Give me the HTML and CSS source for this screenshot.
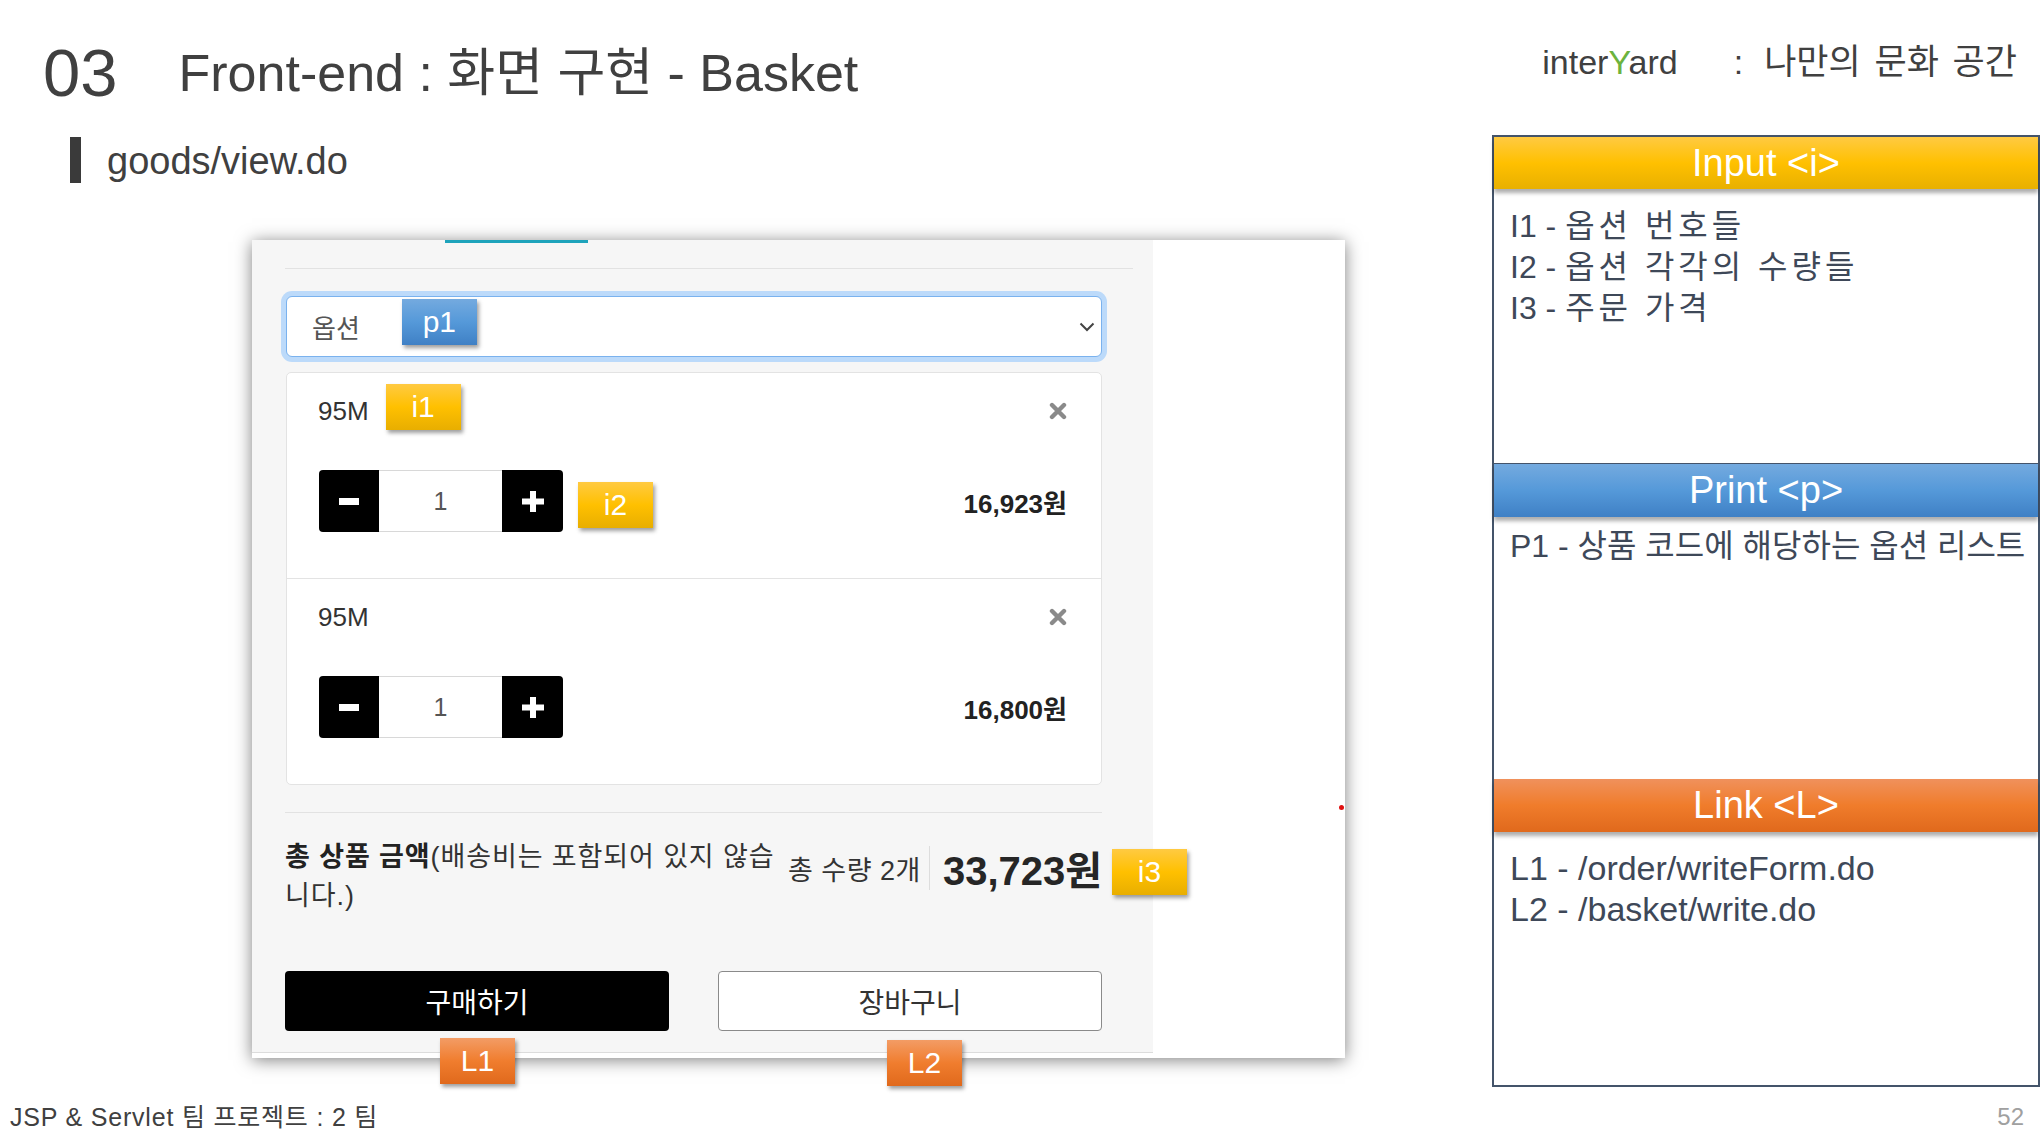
FILE: index.html
```html
<!DOCTYPE html>
<html lang="ko">
<head>
<meta charset="utf-8">
<title>Front-end : 화면 구현 - Basket</title>
<link rel="stylesheet" href="styles.css">
</head>
<body>
<div class="slide">
  <header class="top">
    <div class="title-group">
      <span class="num">03</span>
      <h1 class="title">Front-end : 화면 구현 - Basket</h1>
    </div>
    <div class="brand">
      <span class="brand-name">inter<span class="brand-y">Y</span>ard</span>
      <span class="brand-colon">:</span>
      <span class="brand-motto">나만의 문화 공간</span>
    </div>
  </header>

  <div class="main">
    <section class="left">
      <div class="sub"><span class="sub-bar"></span><span class="sub-text">goods/view.do</span></div>

      <div class="shot">
        <div class="shot-body">
          <div class="tab-line"></div>
          <div class="rule rule-wide"></div>

          <div class="select">
            <span class="select-label">옵션</span>
            <span class="badge badge-b badge-p1">p1</span>
            <svg class="chevron" width="16" height="10" viewBox="0 0 16 10"><path d="M1.5 1.5 L8 8 L14.5 1.5" fill="none" stroke="#444" stroke-width="2"/></svg>
          </div>

          <div class="items">
            <div class="item">
              <div class="item-head">
                <span class="item-name">95M</span>
                <span class="badge badge-y badge-i1">i1</span>
                <svg class="close" width="18" height="18" viewBox="0 0 18 18"><path d="M3 3 L15 15 M15 3 L3 15" stroke="#8a8a8a" stroke-width="4.4" stroke-linecap="round"/></svg>
              </div>
              <div class="item-body">
                <div class="qty">
                  <span class="qbtn qbtn-minus"><svg width="20" height="7" viewBox="0 0 20 7"><rect width="20" height="7" fill="#fff"/></svg></span>
                  <span class="qinput">1</span>
                  <span class="qbtn qbtn-plus"><svg width="22" height="21" viewBox="0 0 22 21"><path d="M8 0h6v7.5h8v6h-8V21H8v-7.5H0v-6h8z" fill="#fff"/></svg></span>
                </div>
                <span class="badge badge-y badge-i2">i2</span>
                <span class="price">16,923원</span>
              </div>
            </div>
            <div class="item">
              <div class="item-head">
                <span class="item-name">95M</span>
                <svg class="close" width="18" height="18" viewBox="0 0 18 18"><path d="M3 3 L15 15 M15 3 L3 15" stroke="#8a8a8a" stroke-width="4.4" stroke-linecap="round"/></svg>
              </div>
              <div class="item-body">
                <div class="qty">
                  <span class="qbtn qbtn-minus"><svg width="20" height="7" viewBox="0 0 20 7"><rect width="20" height="7" fill="#fff"/></svg></span>
                  <span class="qinput">1</span>
                  <span class="qbtn qbtn-plus"><svg width="22" height="21" viewBox="0 0 22 21"><path d="M8 0h6v7.5h8v6h-8V21H8v-7.5H0v-6h8z" fill="#fff"/></svg></span>
                </div>
                <span class="price">16,800원</span>
              </div>
            </div>
          </div>

          <div class="rule"></div>

          <div class="summary">
            <p class="sum-label"><b>총 상품 금액</b>(배송비는 포함되어 있지 않습<br>니다.)</p>
            <div class="sum-right">
              <span class="sum-qty">총 수량 2개</span>
              <span class="sum-sep"></span>
              <span class="sum-total">33,723원</span>
            </div>
            <span class="badge badge-y badge-i3">i3</span>
          </div>

          <div class="actions">
            <span class="btn btn-buy">구매하기</span>
            <span class="btn btn-cart">장바구니</span>
            <span class="badge badge-o badge-l1">L1</span>
            <span class="badge badge-o badge-l2">L2</span>
          </div>
        </div>
        <div class="shot-side"><span class="red-dot"></span></div>
      </div>
    </section>

    <aside class="legend">
      <div class="sec sec-input">
        <div class="sec-head head-y">Input &lt;i&gt;</div>
        <div class="sec-body body-input">
          <p>I1 - <span class="ko-wide">옵션 번호들</span></p>
          <p>I2 - <span class="ko-wide">옵션 각각의 수량들</span></p>
          <p>I3 - <span class="ko-wide">주문 가격</span></p>
        </div>
      </div>
      <div class="sec sec-print">
        <div class="sec-head head-b">Print &lt;p&gt;</div>
        <div class="sec-body body-print">
          <p>P1 - 상품 코드에 해당하는 옵션 리스트</p>
        </div>
      </div>
      <div class="sec sec-link">
        <div class="sec-head head-o">Link &lt;L&gt;</div>
        <div class="sec-body body-link">
          <p>L1 - /order/writeForm.do</p>
          <p>L2 - /basket/write.do</p>
        </div>
      </div>
    </aside>
  </div>

  <footer class="foot">
    <span class="foot-left">JSP &amp; Servlet 팀 프로젝트 : 2 팀</span>
    <span class="foot-page">52</span>
  </footer>
</div>
</body>
</html>
```

FILE: styles.css
```css
* { box-sizing: border-box; }

html, body {
  margin: 0;
  padding: 0;
  background: #ffffff;
}

body {
  font-family: "Liberation Sans", "Noto Sans CJK KR", Arial, sans-serif;
  color: #404040;
}

p { margin: 0; }

.slide {
  width: 2040px;
  height: 1147px;
  display: flex;
  flex-direction: column;
  overflow: hidden;
}

/* ---------- top ---------- */
.top {
  height: 135px;
  display: flex;
  justify-content: space-between;
  align-items: flex-start;
  flex: none;
}

.title-group {
  display: flex;
  align-items: flex-start;
  padding-left: 43px;
}

.num {
  font-size: 67px;
  line-height: 66px;
  margin-top: 40px;
  color: #404040;
}

.title {
  margin: 48px 0 0 61px;
  font-size: 52px;
  line-height: 50px;
  font-weight: normal;
  color: #404040;
}

.brand {
  margin-top: 45px;
  padding-right: 23px;
  display: flex;
  align-items: baseline;
  font-size: 34px;
  line-height: 34px;
  color: #404040;
}

.brand-y { color: #6cb33e; }

.brand-colon { margin-left: 56px; }

.brand-motto {
  margin-left: 21px;
  font-size: 35px;
  word-spacing: 4px;
}

/* ---------- main ---------- */
.main {
  flex: 1;
  display: flex;
}

.left {
  width: 1492px;
  flex: none;
}

.sub {
  display: flex;
  align-items: center;
  height: 46px;
  margin: 2px 0 0 70px;
}

.sub-bar {
  width: 11px;
  height: 46px;
  background: #3a3a3a;
}

.sub-text {
  margin: 3px 0 0 26px;
  font-size: 38px;
  color: #404040;
}

/* ---------- screenshot panel ---------- */
.shot {
  margin: 57px 0 0 252px;
  width: 1093px;
  height: 818px;
  display: flex;
  background: #ffffff;
  box-shadow: 0 2px 16px rgba(0, 0, 0, 0.5);
}

.shot-body {
  position: relative;
  width: 901px;
  height: 813px;
  flex: none;
  padding-left: 33px;
  background: #f6f6f6;
  border-bottom: 1px solid #dcdcdc;
}

.shot-side {
  position: relative;
  flex: 1;
}

.red-dot {
  position: absolute;
  left: 186px;
  top: 565px;
  width: 5px;
  height: 5px;
  border-radius: 50%;
  background: #e01010;
}

.tab-line {
  margin-left: 160px;
  width: 143px;
  height: 3px;
  background: #1ea3bb;
}

.rule {
  margin-top: 27px;
  width: 817px;
  height: 1px;
  background: #e2e2e2;
}

.rule-wide {
  margin-top: 25px;
  width: 848px;
}

.select {
  margin: 27px 0 0 1px;
  width: 816px;
  height: 61px;
  display: flex;
  align-items: center;
  padding-left: 25px;
  background: #ffffff;
  border: 1px solid #7ab2ee;
  border-radius: 6px;
  box-shadow: 0 0 0 5px #bcdafa;
}

.select-label {
  font-size: 26px;
  color: #555555;
}

.badge-p1 {
  align-self: flex-start;
  margin: 2px 0 0 42px;
}

.chevron {
  margin-left: auto;
  margin-right: 6px;
}

.items {
  margin: 15px 0 0 1px;
  width: 816px;
  background: #ffffff;
  border: 1px solid #e3e3e3;
  border-radius: 5px;
}

.item {
  padding: 10px 34px 46px 31px;
}

.item + .item {
  border-top: 1px solid #e3e3e3;
}

.item-head {
  display: flex;
  align-items: center;
  height: 56px;
}

.item-name {
  font-size: 26px;
  color: #333333;
}

.badge-i1 {
  align-self: flex-start;
  margin: 1px 0 0 17px;
}

.close { margin-left: auto; }

.item-body {
  margin-top: 31px;
  height: 62px;
  display: flex;
  align-items: center;
}

.qty {
  display: flex;
  width: 244px;
  height: 62px;
  margin-left: 1px;
}

.qbtn {
  width: 60px;
  height: 62px;
  display: flex;
  align-items: center;
  justify-content: center;
  background: #000000;
}

.qbtn-minus { border-radius: 4px 0 0 4px; }

.qbtn-plus {
  width: 61px;
  border-radius: 0 4px 4px 0;
}

.qinput {
  width: 123px;
  height: 62px;
  display: flex;
  align-items: center;
  justify-content: center;
  background: #ffffff;
  border-top: 1px solid #d8d8d8;
  border-bottom: 1px solid #d8d8d8;
  font-size: 25px;
  color: #555555;
}

.badge-i2 {
  align-self: flex-start;
  margin: 12px 0 0 15px;
}

.price {
  margin-left: auto;
  font-size: 26px;
  font-weight: bold;
  color: #222222;
}

.summary {
  position: relative;
  margin-top: 25px;
  display: flex;
  align-items: flex-start;
}

.sum-label {
  width: 493px;
  font-size: 27px;
  line-height: 39px;
  letter-spacing: 0.9px;
  color: #333333;
  white-space: nowrap;
}

.sum-label b {
  font-weight: bold;
  color: #222222;
}

.sum-right {
  margin-top: 8px;
  height: 44px;
  display: flex;
  align-items: center;
}

.sum-qty {
  margin-left: 10px;
  font-size: 27px;
  letter-spacing: 0.5px;
  color: #333333;
  white-space: nowrap;
}

.sum-sep {
  width: 1px;
  height: 44px;
  margin: 0 13px 0 8px;
  background: #dddddd;
}

.sum-total {
  font-size: 40px;
  font-weight: bold;
  color: #262626;
  white-space: nowrap;
}

.badge-i3 {
  position: absolute;
  left: 827px;
  top: 11px;
  width: 76px;
  height: 47px;
}

.actions {
  position: relative;
  margin-top: 55px;
  display: flex;
  gap: 49px;
}

.btn {
  width: 384px;
  height: 60px;
  display: flex;
  align-items: center;
  justify-content: center;
  border-radius: 4px;
  font-size: 28px;
}

.btn-buy {
  background: #000000;
  color: #ffffff;
}

.btn-cart {
  background: #ffffff;
  color: #333333;
  border: 1px solid #8a8a8a;
}

.badge-l1 {
  position: absolute;
  left: 155px;
  top: 67px;
  height: 48px;
}

.badge-l2 {
  position: absolute;
  left: 602px;
  top: 69px;
  width: 76px;
}

/* ---------- badges ---------- */
.badge {
  width: 75px;
  height: 46px;
  display: inline-flex;
  align-items: center;
  justify-content: center;
  flex: none;
  color: #ffffff;
  font-size: 30px;
  box-shadow: 2px 3px 4px rgba(0, 0, 0, 0.38);
}

.badge-y { background: linear-gradient(#ffca42, #ffc000 50%, #e8ae00); }
.badge-b { background: linear-gradient(#74aadf, #5599d9 50%, #3f80c5); }
.badge-o { background: linear-gradient(#f39c65, #f07d2e 50%, #e0691c); }

/* ---------- legend ---------- */
.legend {
  width: 548px;
  height: 952px;
  flex: none;
  display: flex;
  flex-direction: column;
  border: 2px solid #44546a;
}

.sec {
  display: flex;
  flex-direction: column;
}

.sec-input { height: 326px; }
.sec-print { height: 316px; }
.sec-link { flex: 1; }

.sec-head {
  position: relative;
  z-index: 1;
  text-align: center;
  color: #ffffff;
  font-size: 38px;
  box-shadow: 0 4px 4px rgba(0, 0, 0, 0.32);
}

.head-y {
  height: 52px;
  line-height: 52px;
  background: linear-gradient(#ffca42, #ffc000 50%, #e8b000);
}

.head-b {
  height: 54px;
  line-height: 52px;
  border-top: 1px solid #44546a;
  background: linear-gradient(#74aadf, #5599d9 50%, #3f80c5);
}

.head-o {
  height: 53px;
  line-height: 53px;
  background: linear-gradient(#f0915c, #f07c2b 50%, #e0691c);
}

.sec-body {
  padding-left: 16px;
  font-size: 32px;
  line-height: 41px;
  color: #3e4858;
  white-space: nowrap;
}

.body-input { padding-top: 17px; }

.ko-wide { letter-spacing: 4px; }

.body-print { padding-top: 9px; }

.body-link {
  padding-top: 16px;
  font-size: 34px;
}

/* ---------- footer ---------- */
.foot {
  height: 52px;
  flex: none;
  display: flex;
  justify-content: space-between;
  padding: 10px 16px 0 10px;
  line-height: 24px;
}

.foot-left {
  font-size: 25px;
  letter-spacing: 0.8px;
  color: #404040;
}

.foot-page {
  font-size: 24px;
  color: #a0a0a0;
}
```
